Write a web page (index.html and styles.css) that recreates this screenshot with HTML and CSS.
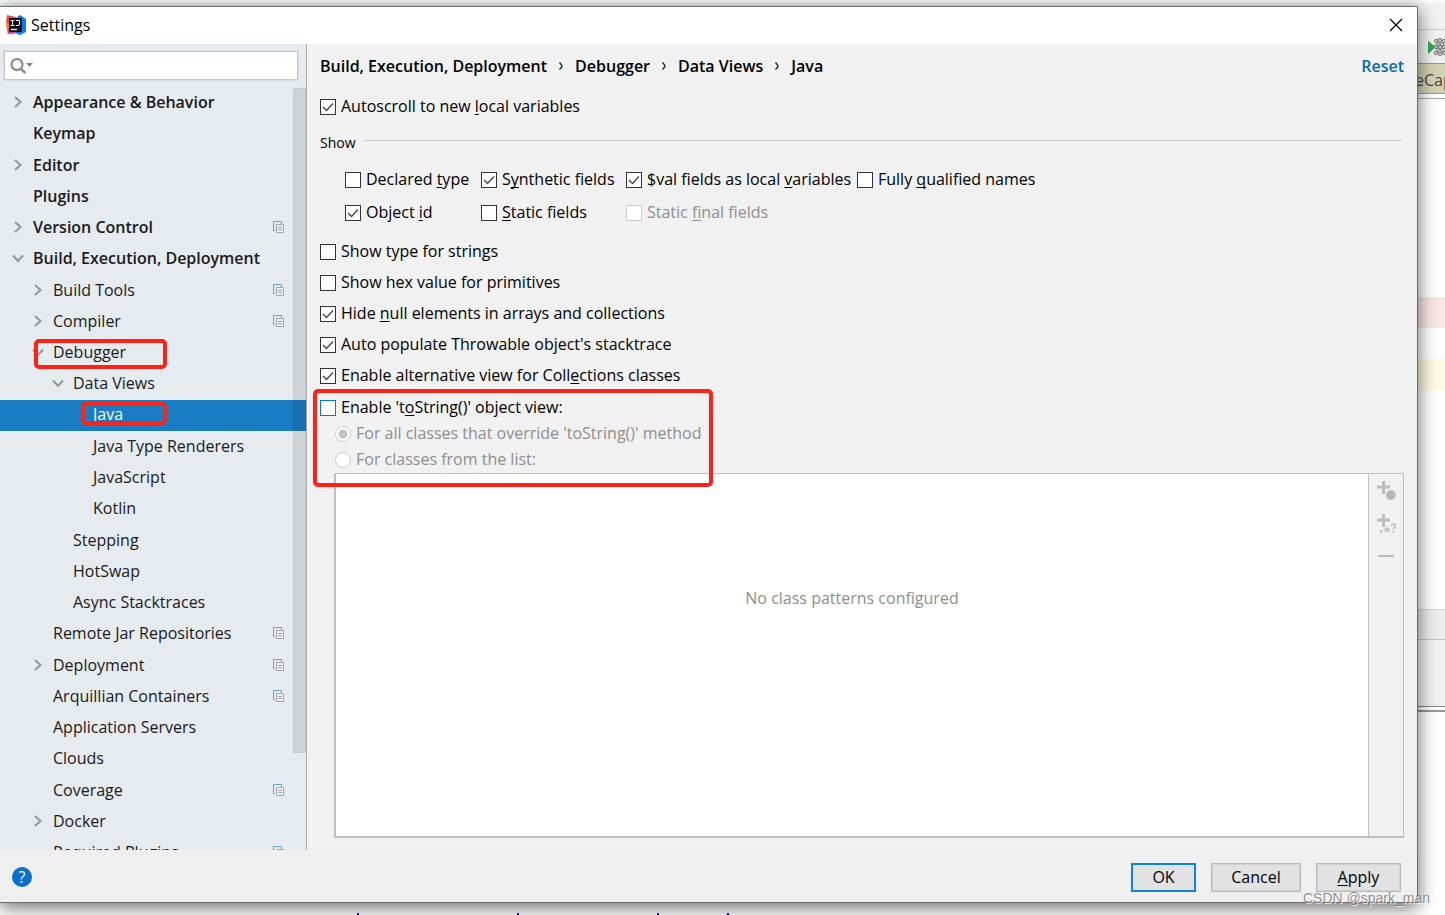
FILE: index.html
```html
<!DOCTYPE html>
<html lang="en">
<head>
<meta charset="utf-8">
<title>Settings</title>
<link rel="stylesheet" href="styles.css">
</head>
<body>
<svg class="defs" aria-hidden="true">
  <symbol id="right" viewBox="0 0 12 12"><path d="M3 1l5.500 5L3 11" fill="none" stroke="#949799" stroke-width="2"/></symbol>
  <symbol id="down" viewBox="0 0 12 12"><path d="M1 3.500l5 5.500 5-5.500" fill="none" stroke="#949799" stroke-width="2"/></symbol>
  <symbol id="copy" viewBox="0 0 12 12"><path d="M3 9.500H1.500V.5h8V3" fill="none" stroke="#6ba3c4"/><path d="M4.500 3.500h7v8h-7z" fill="#eef1f3" stroke="#a4a7a9"/><path d="M6 6.500h4M6 8.500h4" stroke="#a4a7a9"/></symbol>
  <symbol id="crumb" viewBox="0 0 6 10"><path d="M1.500 1.500Q4 4 4 5T1.500 8.500" fill="none" stroke="#222" stroke-width="1.400"/></symbol>
</svg>

<div class="desktop">
  <div class="menubar"></div>
  <div class="toolbar">
    <svg class="run" viewBox="0 0 17 18" aria-hidden="true"><g fill="#fff" stroke="#858585" stroke-width="1.300"><circle cx="8" cy="3" r="1.500"/><circle cx="12" cy="2" r="1.500"/><circle cx="16" cy="3" r="1.500"/><circle cx="10" cy="6" r="1.500"/><circle cx="14" cy="6" r="1.500"/><circle cx="8" cy="9" r="1.500"/><circle cx="12" cy="9" r="1.500"/><circle cx="16" cy="9" r="1.500"/><circle cx="10" cy="12" r="1.500"/><circle cx="14" cy="12" r="1.500"/><circle cx="8" cy="15" r="1.500"/><circle cx="12" cy="16" r="1.500"/><circle cx="16" cy="15" r="1.500"/></g><path d="M0 3l8 6-8 7z" fill="#35a853"/></svg>
  </div>
  <div class="filetab">eCap</div>
  <div class="tabline"></div>
  <div class="editor"><div class="line-pink">;</div><div class="line-yellow"></div></div>
  <div class="panel-head"></div>
  <div class="panel-body"></div>
  <div class="panel-gap"></div>
  <div class="console"><i></i><i></i><i></i><i></i></div>
</div>

<main class="dialog">
  <header class="titlebar">
    <svg class="logo" viewBox="0 0 20 20" aria-hidden="true"><path d="M1 0l9 2-2 14-6 3L1 14l1-3L0 7z" fill="#f9445c"/><path d="M0 7l4 3-2 4-2-2z" fill="#fb8b2b"/><path d="M10 3l4-3 6 4v13l-6 3-5-2z" fill="#087cfa"/><path d="M1 19l3-3h7l-3 3z" fill="#d84a97"/><path d="M3 3h13v14H3z" fill="#111"/><path d="M4.500 5.500h4M4.500 10.500h4M6.500 5v5.500M10 5.500h3.500v3.500q0 1.500-1.500 1.500h-2" fill="none" stroke="#fff"/><path d="M5 14.500h6" stroke="#fff" stroke-width="1.300"/></svg>
    <h1>Settings</h1>
    <button class="close" aria-label="Close"><svg viewBox="0 0 12 12"><path d="M0 0l12 12M12 0L0 12" stroke="#000" stroke-width="1.200"/></svg></button>
  </header>

  <div class="content">
    <aside class="sidebar">
      <label class="search">
        <svg viewBox="0 0 24 16" aria-hidden="true"><circle cx="7" cy="6.500" r="5.500" fill="none" stroke="#929292" stroke-width="2.300"/><path d="M10.500 10.500l5 4.500" stroke="#929292" stroke-width="2.800"/><path d="M16 5h7l-3.500 4z" fill="#858585"/></svg>
        <input type="text" aria-label="Search settings">
      </label>
      <div class="tree-wrap">
        <ul class="tree">
          <li class="bold"><svg><use href="#right"/></svg><span>Appearance &amp; Behavior</span></li>
          <li class="bold"><span>Keymap</span></li>
          <li class="bold"><svg><use href="#right"/></svg><span>Editor</span></li>
          <li class="bold"><span>Plugins</span></li>
          <li class="bold"><svg><use href="#right"/></svg><span>Version Control</span><svg class="copy"><use href="#copy"/></svg></li>
          <li class="bold"><svg><use href="#down"/></svg><span>Build, Execution, Deployment</span></li>
          <li class="l1"><svg><use href="#right"/></svg><span>Build Tools</span><svg class="copy"><use href="#copy"/></svg></li>
          <li class="l1"><svg><use href="#right"/></svg><span>Compiler</span><svg class="copy"><use href="#copy"/></svg></li>
          <li class="l1"><svg><use href="#down"/></svg><span>Debugger</span><b class="mark mark-debugger"></b></li>
          <li class="l2"><svg><use href="#down"/></svg><span>Data Views</span></li>
          <li class="l3 selected"><span>Java</span><b class="mark mark-java"></b></li>
          <li class="l3"><span>Java Type Renderers</span></li>
          <li class="l3"><span>JavaScript</span></li>
          <li class="l3"><span>Kotlin</span></li>
          <li class="l2"><span>Stepping</span></li>
          <li class="l2"><span>HotSwap</span></li>
          <li class="l2"><span>Async Stacktraces</span></li>
          <li class="l1"><span>Remote Jar Repositories</span><svg class="copy"><use href="#copy"/></svg></li>
          <li class="l1"><svg><use href="#right"/></svg><span>Deployment</span><svg class="copy"><use href="#copy"/></svg></li>
          <li class="l1"><span>Arquillian Containers</span><svg class="copy"><use href="#copy"/></svg></li>
          <li class="l1"><span>Application Servers</span></li>
          <li class="l1"><span>Clouds</span></li>
          <li class="l1"><span>Coverage</span><svg class="copy"><use href="#copy"/></svg></li>
          <li class="l1"><svg><use href="#right"/></svg><span>Docker</span></li>
          <li class="l1"><span>Required Plugins</span><svg class="copy"><use href="#copy"/></svg></li>
        </ul>
        <div class="scrollbar"></div>
      </div>
    </aside>

    <section class="page">
      <div class="page-head">
        <nav class="crumbs"><span>Build, Execution, Deployment</span><svg><use href="#crumb"/></svg><span>Debugger</span><svg><use href="#crumb"/></svg><span>Data Views</span><svg><use href="#crumb"/></svg><span>Java</span></nav>
        <a class="reset" href="#">Reset</a>
      </div>
      <label class="opt"><input type="checkbox" checked><span>Autoscroll to new <u>l</u>ocal variables</span></label>
      <div class="group-title"><h2>Show</h2><hr></div>
      <div class="group">
        <label class="opt"><input type="checkbox"><span>Declared <u>t</u>ype</span></label>
        <label class="opt"><input type="checkbox" checked><span>S<u>y</u>nthetic fields</span></label>
        <label class="opt"><input type="checkbox" checked><span>$val fields as local <u>v</u>ariables</span></label>
        <label class="opt"><input type="checkbox"><span>Fully <u>q</u>ualified names</span></label>
        <label class="opt"><input type="checkbox" checked><span>Object <u>i</u>d</span></label>
        <label class="opt"><input type="checkbox"><span><u>S</u>tatic fields</span></label>
        <label class="opt off"><input type="checkbox" disabled><span>Static <u>f</u>inal fields</span></label>
      </div>
      <div class="options">
        <label class="opt"><input type="checkbox"><span>Show type for strings</span></label>
        <label class="opt"><input type="checkbox"><span>Show hex value for primitives</span></label>
        <label class="opt"><input type="checkbox" checked><span>Hide <u>n</u>ull elements in arrays and collections</span></label>
        <label class="opt"><input type="checkbox" checked><span>Auto populate Throwable object's stacktrace</span></label>
        <label class="opt"><input type="checkbox" checked><span>Enable alternative view for Coll<u>e</u>ctions classes</span></label>
      </div>
      <div class="tostring">
        <label class="opt focus"><input type="checkbox"><span>Enable 't<u>o</u>String()' object view:</span></label>
        <label class="opt radio off"><input type="radio" name="scope" checked disabled><span>For all classes that override 'toString()' method</span></label>
        <label class="opt radio off"><input type="radio" name="scope" disabled><span>For classes from the list:</span></label>
        <b class="mark mark-tostring"></b>
      </div>
      <div class="patterns">
        <div class="empty">No class patterns configured</div>
        <div class="tools">
          <button disabled aria-label="Add class"><svg viewBox="0 0 20 20"><path d="M1 7h13M7.500 1v13" stroke="#bdbdbd" stroke-width="3"/><circle cx="15" cy="15" r="5.500" fill="#bdbdbd" stroke="#f2f2f2"/><path d="M16.800 13.500a2.300 2.300 0 1 0 0 3" fill="none" stroke="#aaa"/></svg></button>
          <button disabled aria-label="Add pattern"><svg viewBox="0 0 20 20"><path d="M1 7h13M7.500 1v13" stroke="#bdbdbd" stroke-width="3"/><path d="M4 17h2.500v2.500H4zM11 13l1 2.500h3l-2.200 1.500.9 2.500-2.700-1.500-2.500 1.500.8-2.500-2.100-1.500h2.800z" fill="#bdbdbd"/><path d="M15.500 13q0-1.800 2-1.800t2 1.800q0 1.200-2 2.500v1M17.500 18v2" fill="none" stroke="#bdbdbd" stroke-width="1.500"/></svg></button>
          <button disabled aria-label="Remove"><svg viewBox="0 0 20 20"><path d="M2 10h16" stroke="#bdbdbd" stroke-width="2"/></svg></button>
        </div>
      </div>
    </section>
  </div>

  <footer class="footer">
    <button class="help" aria-label="Help">?</button>
    <button class="btn ok">OK</button>
    <button class="btn cancel">Cancel</button>
    <button class="btn apply"><u>A</u>pply</button>
  </footer>
</main>
<div class="watermark">CSDN @spark_man</div>
</body>
</html>
```
FILE: styles.css
```css
* { box-sizing: border-box; }
body {
  margin: 0;
  height: 100vh;
  overflow: hidden;
  position: relative;
  font: 16px/20px "Open Sans", "Noto Sans", sans-serif;
  color: #000;
}
h1, h2, ul { margin: 0; padding: 0; font-weight: normal; font-size: inherit; list-style: none; }
button { font: inherit; color: inherit; padding: 0; border: 0; background: none; }
u { text-decoration-thickness: 1px; text-underline-offset: 2px; text-decoration-skip-ink: none; }
.defs { position: absolute; width: 0; height: 0; }

/* IDE window behind the dialog */
.desktop { height: 100%; display: flex; flex-direction: column; background: #fff; }
.menubar { height: 30px; background: #f2f2f2; border-top: 3px solid #fafafa; border-bottom: 1px solid #cfcfcf; }
.toolbar { height: 34px; background: #f2f2f2; border-bottom: 1px solid #999; display: flex; justify-content: flex-end; align-items: center; }
.run { width: 17px; height: 18px; }
.filetab { height: 30px; background: #d4d2b5; border-bottom: 1px solid #999; display: flex; align-items: center; padding: 3px 0 0 calc(100% - 30px); white-space: nowrap; overflow: hidden; color: #444; }
.tabline { height: 5px; border-bottom: 1px solid #aaa; }
.editor { height: 510px; padding-top: 198px; }
.line-pink { height: 31px; background: #f9e8e6; padding-left: calc(100% - 30px); line-height: 0; color: #0033b3; }
.line-yellow { height: 31px; margin-top: 31px; background: #fefae3; }
.panel-head { height: 31px; background: #ededed; border-top: 1px solid #d5d5d5; border-bottom: 1px solid #c4c4c4; }
.panel-body { height: 67px; background: #f2f2f2; border-bottom: 1px solid #888; }
.panel-gap { height: 5px; border-bottom: 2px solid #999; }
.console { flex: 1; display: flex; align-items: flex-end; gap: 68px; padding-left: 357px; }
.console i { width: 2px; height: 2px; background: #1a1a9c; margin-right: 70px; }
.console i:nth-child(1) { margin-right: 90px; }
.console i:nth-child(3) { margin-right: 0; }

/* Dialog window */
.dialog {
  position: absolute;
  inset: 6px 27px 12px 0;
  display: flex;
  flex-direction: column;
  background: #f1f1f1;
  border: 1px solid #6c6c6c;
  border-left: 0;
  box-shadow: 0 4px 18px rgba(0, 0, 0, .6);
}
.titlebar { height: 37px; background: #fff; display: flex; align-items: center; padding: 0 15px 2px 6px; gap: 5px; }
.logo { width: 20px; height: 20px; }
.titlebar h1 { flex: 1; }
.close { width: 12px; height: 12px; display: flex; }
.close svg { width: 12px; height: 12px; overflow: visible; }

.content { flex: 1; min-height: 0; display: flex; }
.sidebar { width: 307px; background: #e6ebf0; border-right: 1px solid #a9a9a9; display: flex; flex-direction: column; color: #1a1a1a; }
.search { height: 29px; margin: 7px 8px 8px 4px; padding-left: 5px; background: #fff; border: 1px solid #c4c6c8; outline: 1px solid #dadde0; display: flex; align-items: center; }
.search svg { width: 24px; height: 16px; }
.search input { flex: 1; min-width: 0; height: 24px; border: 0; outline: 0; background: none; font: inherit; }
.tree-wrap { flex: 1; min-height: 0; position: relative; overflow: hidden; }
.tree li { height: 31px; display: flex; align-items: center; padding: 0 22px 3px 33px; position: relative; white-space: nowrap; }
.tree li:nth-child(4n+3) { height: 32px; }
.tree li.l1 { padding-left: 53px; }
.tree li.l2 { padding-left: 73px; }
.tree li.l3 { padding-left: 93px; }
.tree li.bold { font-weight: 600; }
.tree svg { width: 12px; height: 12px; flex: none; margin: 0 9px 0 -21px; }
.tree svg.copy { margin: 0 0 0 auto; }
.tree li.selected { background: #1a7dc4; color: #fff; height: 31px; margin-bottom: 1px; }
.scrollbar { position: absolute; top: 0; right: 0; width: 13px; height: 665px; background: rgba(0, 0, 0, .1); border: 1px solid rgba(0, 0, 0, .04); }

.page { flex: 1; min-width: 0; padding: 12px 13px; display: flex; flex-direction: column; }
.page-head { display: flex; justify-content: space-between; font-weight: 600; margin-bottom: 21px; }
.crumbs { display: flex; align-items: center; gap: 11px; }
.crumbs svg { width: 6px; height: 10px; }
.reset { color: #0068c4; text-decoration: none; }
.opt { display: flex; align-items: center; gap: 5px; height: 20px; white-space: nowrap; }
.opt span { padding-bottom: 2px; }
.opt input { appearance: none; width: 16px; height: 16px; margin: 0; border: 1px solid #333; background: #fff; flex: none; }
.opt input[type="checkbox"]:checked { background: #fff url("data:image/svg+xml,%3Csvg xmlns='http://www.w3.org/2000/svg' viewBox='0 0 14 14'%3E%3Cpath d='M2 7l3.500 3.500L12 3.500' fill='none' stroke='%23444' stroke-width='1.300'/%3E%3C/svg%3E"); }
.opt.off { color: #8e8e8e; }
.opt.off input { border-color: #ccc; }
.opt.focus input { border-color: #0078d7; }
.opt.radio input { border-radius: 50%; }
.opt.radio input:checked { background: radial-gradient(circle, #c3c3c3 4px, #fff 5px); }
.group-title { display: flex; align-items: center; gap: 8px; margin-top: 16px; font-size: 14px; }
.group-title hr { flex: 1; margin: 0 2px 6px 0; border: 0; border-top: 1px solid #ccc; }
.group { display: grid; grid-template-columns: 136px 145px 231px auto; justify-content: start; row-gap: 13px; margin: 17px 0 19px 25px; }
.options { display: flex; flex-direction: column; gap: 11px; }
.tostring { position: relative; margin-top: 12px; display: flex; flex-direction: column; gap: 6px; padding-bottom: 3px; }
.tostring .radio { margin-left: 15px; }
.patterns { flex: 1; min-height: 0; margin-left: 14px; display: flex; border: 1px solid #bfbfbf; border-left-width: 2px; border-bottom-width: 2px; background: #fff; }
.empty { flex: 1; text-align: center; padding-top: 114px; color: #8e8e8e; }
.tools { width: 35px; background: #f1f1f1; border-left: 1px solid #bfbfbf; display: flex; flex-direction: column; align-items: center; gap: 13px; padding-top: 6px; }
.tools button { height: 20px; }
.tools svg { width: 20px; height: 20px; display: block; }

.footer { height: 52px; display: flex; align-items: center; padding: 2px 16px 0 12px; background: #efefef; }
.help { width: 20px; height: 20px; border-radius: 50%; background: #0b6fd0; color: #fff; line-height: 20px; margin-right: auto; }
.btn { height: 29px; background: #e2e2e2; border: 1px solid #b9b9b9; outline: 1px solid #d0d0d0; outline-offset: -2px; }
.ok { width: 65px; border: 2px solid #0a84e0; outline: 0; }
.cancel { width: 90px; margin: 0 15px; }
.apply { width: 85px; }

/* Red highlight frames drawn over the dialog */
.mark { position: absolute; border: 4px solid #ff2116; border-radius: 5px; pointer-events: none; }
.mark-debugger { left: 34px; top: 1px; width: 133px; height: 30px; }
.mark-java { left: 81px; top: 2px; width: 86px; height: 23px; }
.mark-tostring { left: -7px; top: -9px; width: 400px; height: 98px; }
.watermark { position: absolute; right: 15px; bottom: 7px; font: 14px/20px "Liberation Sans", Arial, sans-serif; color: rgba(110, 110, 110, .75); text-shadow: 1px 1px 0 rgba(255, 255, 255, .7); }
```
